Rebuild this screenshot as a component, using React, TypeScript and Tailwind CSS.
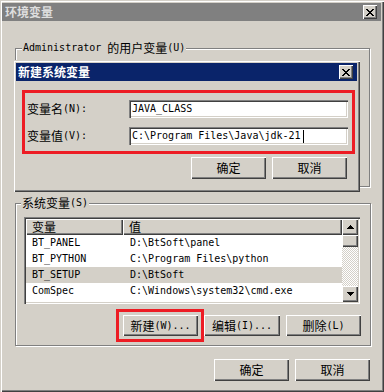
import React from "react";

const CJK = /[\u3000-\u9fff\uff00-\uffef]/;

// SimSun-like mix: CJK at 12px, Latin half-width at 6px per char
function T({ s }: { s: string }) {
  const parts = s.match(/[\u3000-\u9fff\uff00-\uffef]+|[^\u3000-\u9fff\uff00-\uffef]+/g) ?? [];
  return (
    <>
      {parts.map((p, i) =>
        CJK.test(p) ? (
          <span key={i} className="font-['Noto_Sans_CJK_SC',sans-serif] text-[12px] leading-[14px]">{p}</span>
        ) : (
          <span key={i} className="font-['DejaVu_Sans_Mono',monospace] text-[10px] leading-[14px] whitespace-pre">{p}</span>
        )
      )}
    </>
  );
}

const raised =
  "bg-[#d4d0c8] shadow-[inset_1px_1px_0_#fff,inset_-1px_-1px_0_#404040,inset_-2px_-2px_0_#808080]";
const sunken =
  "shadow-[inset_1px_1px_0_#808080,inset_2px_2px_0_#404040,inset_-1px_-1px_0_#fff,inset_-2px_-2px_0_#d4d0c8]";
const frame =
  "shadow-[inset_1px_1px_0_#d4d0c8,inset_2px_2px_0_#fff,inset_-1px_-1px_0_#404040,inset_-2px_-2px_0_#808080]";
const groupBox =
  "relative border border-[#808080] shadow-[inset_1px_1px_0_#fff,1px_1px_0_#fff]";

function CloseGlyph() {
  return (
    <svg width="8" height="7" viewBox="0 0 8 7" shapeRendering="crispEdges">
      <path
        fill="#000"
        d="M0 0h2v1H0z M6 0h2v1H6z M1 1h2v1H1z M5 1h2v1H5z M2 2h4v1H2z M3 3h2v1H3z M2 4h4v1H2z M1 5h2v1H1z M5 5h2v1H5z M0 6h2v1H0z M6 6h2v1H6z"
      />
    </svg>
  );
}

function Arrow({ down }: { down?: boolean }) {
  return (
    <svg width="7" height="4" viewBox="0 0 7 4" shapeRendering="crispEdges" className={down ? "rotate-180" : ""}>
      <path fill="#000" d="M3 0h1v1H3z M2 1h3v1H2z M1 2h5v1H1z M0 3h7v1H0z" />
    </svg>
  );
}

function CloseBtn() {
  return (
    <div className={`${raised} w-[14px] h-[14px] flex items-center justify-center`}>
      <CloseGlyph />
    </div>
  );
}

function Btn({ label, h = "h-[22px]", w = "w-[75px]" }: { label: string; h?: string; w?: string }) {
  return (
    <div className={`${raised} ${w} ${h} flex items-center justify-center text-black`}>
      <T s={label} />
    </div>
  );
}

const ROWS = [
  { name: "BT_PANEL", value: "D:\\BtSoft\\panel" },
  { name: "BT_PYTHON", value: "C:\\Program Files\\python" },
  { name: "BT_SETUP", value: "D:\\BtSoft", selected: true },
  { name: "ComSpec", value: "C:\\Windows\\system32\\cmd.exe" },
];

export default function App() {
  return (
    <div className="relative w-[384px] h-[392px] overflow-hidden bg-[#d4d0c8] text-black">
      {/* outer window */}
      <div className={`${frame} h-full flex flex-col pl-[2px] pt-[3px] pr-[3px]`}>
        <div className="h-[18px] bg-[#808080] flex items-center justify-between pl-[3px] pr-[4px]">
          <span className="font-['Noto_Sans_CJK_SC',sans-serif] text-[12px] font-bold text-[#dedede] leading-[14px]">
            环境变量
          </span>
          <CloseBtn />
        </div>

        <div className="flex flex-col pl-[13px]">
          <div className={`${groupBox} mt-[27px] w-[355px] h-[139px]`}>
            <span className="absolute -top-[8px] left-[6px] bg-[#d4d0c8] px-[1px] flex items-center">
              <T s="Administrator 的用户变量(U)" />
            </span>
          </div>

          <div className={`${groupBox} mt-[16px] w-[356px] h-[143px] flex flex-col`}>
            <span className="absolute -top-[8px] left-[5px] bg-[#d4d0c8] px-[1px] flex items-center">
              <T s="系统变量(S)" />
            </span>

            {/* list view */}
            <div className={`${sunken} mt-[13px] ml-[8px] w-[336px] h-[87px] bg-white p-[2px] flex`}>
              <div className="flex-1 flex flex-col">
                <div className="h-[16px] flex shrink-0">
                  <div className={`${raised} w-[97px] flex items-center pl-[6px]`}>
                    <T s="变量" />
                  </div>
                  <div className={`${raised} flex-1 flex items-center pl-[6px]`}>
                    <T s="值" />
                  </div>
                </div>
                {ROWS.map((r) => (
                  <div
                    key={r.name}
                    className={`h-[16px] flex items-center shrink-0 ${r.selected ? "bg-[#d4d0c8]" : ""}`}
                  >
                    <div className="w-[97px] pl-[6px] flex items-center">
                      <T s={r.name} />
                    </div>
                    <div className="flex-1 pl-[7px] flex items-center">
                      <T s={r.value} />
                    </div>
                  </div>
                ))}
              </div>
              <div className="w-[16px] flex flex-col">
                <div className={`${raised} h-[16px] flex items-center justify-center`}>
                  <Arrow />
                </div>
                <div className={`${raised} h-[12px]`} />
                <div className="flex-1 bg-[repeating-conic-gradient(#d4d0c8_0_25%,#fff_0_50%)] bg-[length:2px_2px]" />
                <div className={`${raised} h-[16px] flex items-center justify-center`}>
                  <Arrow down />
                </div>
              </div>
            </div>

            <div className="mt-[11px] flex justify-end gap-[6px] pr-[9px]">
              <div className="relative">
                <Btn label="新建(W)..." h="h-[21px]" />
                <span className="absolute -left-[7px] -right-[6px] -top-[6px] -bottom-[6px] border-[3px] border-[#ed1c24]" />
              </div>
              <Btn label="编辑(I)..." h="h-[21px]" w="w-[76px]" />
              <Btn label="删除(L)" h="h-[21px]" />
            </div>
          </div>

          <div className="mt-[13px] flex justify-end gap-[6px] pr-[11px]">
            <Btn label="确定" />
            <Btn label="取消" />
          </div>
        </div>
      </div>

      {/* child dialog over the user-variable group */}
      <div className={`${frame} absolute left-[13px] top-[60px] w-[347px] h-[132px] bg-[#d4d0c8] flex flex-col pl-[3px] pt-[3px] pr-[3px]`}>
        <div className="h-[18px] bg-[#0a246a] flex items-center justify-between pl-[2px] pr-[4px]">
          <span className="font-['Noto_Sans_CJK_SC',sans-serif] text-[12px] font-bold text-white leading-[14px]">
            新建系统变量
          </span>
          <CloseBtn />
        </div>

        <div className="mt-[9px] ml-[6px] w-[333px] h-[64px] border-[3px] border-[#ed1c24] flex flex-col pt-[7px] gap-[9px]">
          <div className="flex items-center h-[18px]">
            <div className="w-[104px] pl-[2px] flex items-center">
              <T s="变量名(N):" />
            </div>
            <div className={`${sunken} w-[219px] h-[18px] bg-white flex items-center pl-[3px]`}>
              <T s="JAVA_CLASS" />
            </div>
          </div>
          <div className="flex items-center h-[18px]">
            <div className="w-[104px] pl-[2px] flex items-center">
              <T s="变量值(V):" />
            </div>
            <div className={`${sunken} w-[219px] h-[18px] bg-white flex items-center pl-[3px]`}>
              <T s="C:\Program Files\Java\jdk-21" />
              <span className="ml-[2px] w-px h-[13px] bg-black" />
            </div>
          </div>
        </div>

        <div className="mt-[3px] flex justify-end gap-[6px] pr-[10px]">
          <Btn label="确定" />
          <Btn label="取消" />
        </div>
      </div>
    </div>
  );
}
